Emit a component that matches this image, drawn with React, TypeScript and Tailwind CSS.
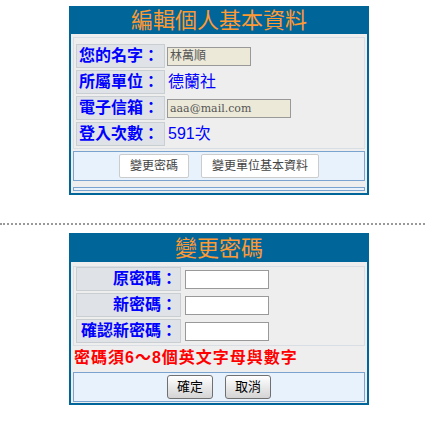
const cjk = "font-['Liberation_Sans','Noto_Sans_CJK_TC',sans-serif]"

function Panel({ title, headerH, children }: { title: string; headerH: string; children: React.ReactNode }) {
  return (
    <div className="ml-[69px] w-[300px] border-2 border-[#006699] bg-[#006699]">
      <div className={`${headerH} flex items-center justify-center text-[22px] leading-none text-[#ff9933] ${cjk}`}>
        {title}
      </div>
      {children}
    </div>
  )
}

function Label({ text, w, right }: { text: string; w: string; right?: boolean }) {
  return (
    <div
      className={`${w} h-[24px] shrink-0 flex items-center border border-[#c9ced3] bg-[#dfe3e8] text-[16px] font-bold text-[#0000ff] ${
        right ? 'justify-end pr-[3px]' : 'pl-[2px]'
      }`}
    >
      {text}
    </div>
  )
}

function BlueBar({ children }: { children: React.ReactNode }) {
  return (
    <div className="mt-[2px] h-[30px] flex items-center justify-center gap-[12px] border border-[#7ba3d0] bg-[#e8f2fc]">
      {children}
    </div>
  )
}

export default function App() {
  return (
    <div className={`w-[425px] h-[431px] bg-white pt-[6px] ${cjk}`}>
      <Panel title="編輯個人基本資料" headerH="h-[26px]">
        <div className="bg-[#eeeeee] px-[2px] pt-[3px] pb-[2px]">
          <div className="border border-[#d8dee4] px-[2px] pt-[6px] pb-[2px] flex flex-col gap-[2px]">
            <div className="flex items-center">
              <Label text="您的名字：" w="w-[89px]" />
              <div className="ml-[2px] w-[84px] h-[19px] border border-[#999999] bg-[#ece9d8] pl-[2px] text-[12px] leading-[17px] text-[#555555]">
                林萬順
              </div>
            </div>
            <div className="flex items-center">
              <Label text="所屬單位：" w="w-[89px]" />
              <span className="ml-[3px] text-[16px] text-[#0000ff]">德蘭社</span>
            </div>
            <div className="flex items-center">
              <Label text="電子信箱：" w="w-[89px]" />
              <div className="ml-[2px] w-[124px] h-[19px] border border-[#999999] bg-[#ece9d8] pl-[2px] text-[11px] leading-[17px] text-[#555555] font-['DejaVu_Serif',serif]">
                aaa@mail.com
              </div>
            </div>
            <div className="flex items-center">
              <Label text="登入次數：" w="w-[89px]" />
              <span className="ml-[3px] text-[16px] text-[#0000ff]">591次</span>
            </div>
          </div>
          <BlueBar>
            <button className="w-[70px] h-[24px] border border-[#cccccc] rounded-[2px] bg-white text-[12px] text-[#444444]">
              變更密碼
            </button>
            <button className="w-[118px] h-[24px] border border-[#cccccc] rounded-[2px] bg-white text-[12px] text-[#444444]">
              變更單位基本資料
            </button>
          </BlueBar>
          <div className="mt-[6px] h-[4px] border border-[#7ba3d0] bg-[#e8f2fc]" />
        </div>
      </Panel>

      <div className="mt-[28px] border-t-2 border-dotted border-[#999999]" />

      <div className="mt-[8px]">
        <Panel title="變更密碼" headerH="h-[27px]">
          <div className="bg-[#eeeeee] px-[2px] pt-[4px] pb-[1px]">
            <div className="border border-[#d8dee4] px-[2px] pb-[2px] flex flex-col gap-[2px]">
              {['原密碼：', '新密碼：', '確認新密碼：'].map((t) => (
                <div key={t} className="flex items-center">
                  <Label text={t} w="w-[105px]" right />
                  <input
                    type="password"
                    className="ml-[4px] w-[84px] h-[19px] border border-[#999999] bg-white outline-none"
                  />
                </div>
              ))}
            </div>
            <div className="h-[24px] flex items-center pl-[1px] text-[16px] font-bold tracking-[1px] text-[#ff0000]">
              密碼須6～8個英文字母與數字
            </div>
            <BlueBar>
              <button className="w-[46px] h-[24px] border border-[#707070] rounded-[3px] bg-gradient-to-b from-white to-[#d4d4d4] text-[13px] text-black">
                確定
              </button>
              <button className="w-[46px] h-[24px] border border-[#707070] rounded-[3px] bg-gradient-to-b from-white to-[#d4d4d4] text-[13px] text-black">
                取消
              </button>
            </BlueBar>
          </div>
        </Panel>
      </div>
    </div>
  )
}
